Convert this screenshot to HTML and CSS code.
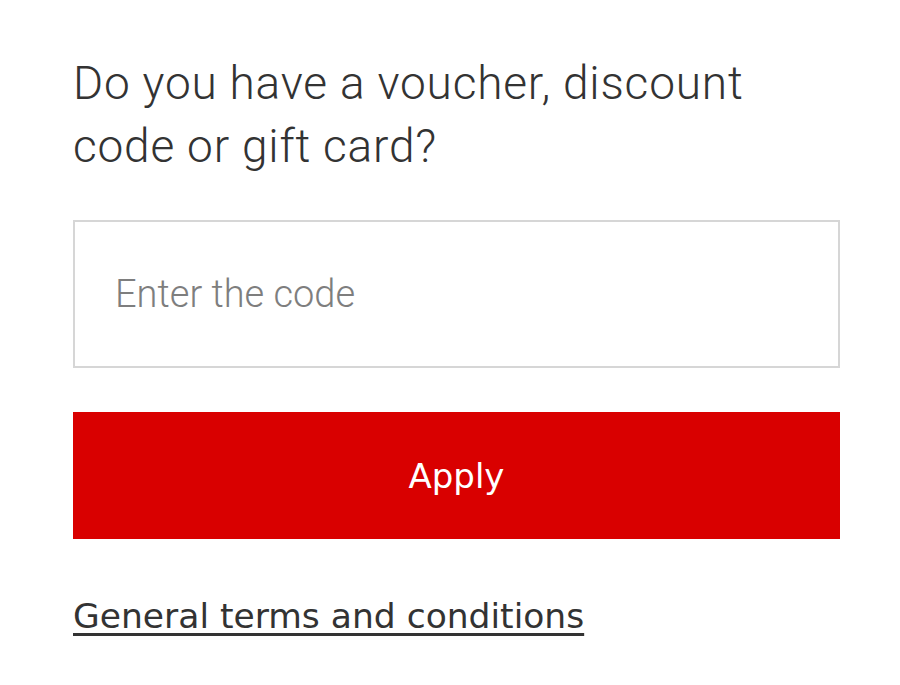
FILE: index.html
```html
<!DOCTYPE html>
<html lang="en">
<head>
<meta charset="utf-8">
<title>Voucher</title>
<link rel="stylesheet" href="styles.css">
</head>
<body>
<main class="voucher">
  <h1 class="voucher-title">Do you have a voucher, discount code or gift card?</h1>
  <input class="voucher-input" type="text" placeholder="Enter the code">
  <button class="voucher-button" type="button">Apply</button>
  <a class="voucher-link" href="#">General terms and conditions</a>
</main>
</body>
</html>
```
FILE: styles.css
```css
html, body {
  margin: 0;
  padding: 0;
  background: #ffffff;
}

.voucher {
  width: 767px;
  margin-left: 73px;
  padding-top: 52px;
  display: flex;
  flex-direction: column;
  align-items: stretch;
}

.voucher-title {
  margin: 0;
  width: 700px;
  font-family: Roboto, "Liberation Sans", sans-serif;
  font-weight: 300;
  font-size: 46px;
  letter-spacing: 0.8px;
  line-height: 63px;
  color: #333333;
}

.voucher-input {
  box-sizing: border-box;
  margin-top: 42px;
  height: 148px;
  border: 2px solid #d6d6d6;
  padding: 0 0 0 40px;
  font-family: Roboto, "Liberation Sans", sans-serif;
  font-weight: 300;
  font-size: 38px;
  color: #333333;
  outline: none;
}

.voucher-input::placeholder {
  color: #7e7e7e;
  opacity: 1;
}

.voucher-button {
  margin-top: 44px;
  height: 127px;
  border: 0;
  background: #d90000;
  color: #ffffff;
  font-family: "DejaVu Sans", Verdana, sans-serif;
  font-size: 34px;
  cursor: pointer;
}

.voucher-link {
  align-self: flex-start;
  margin-top: 57px;
  font-family: "DejaVu Sans", Verdana, sans-serif;
  font-size: 34.5px;
  color: #333333;
  text-decoration: underline;
  text-underline-offset: 5px;
}
```
